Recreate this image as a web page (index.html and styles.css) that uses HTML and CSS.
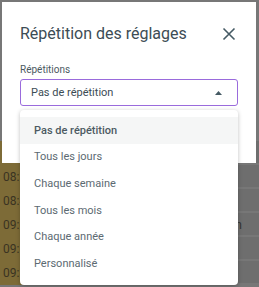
FILE: index.html
```
<html>
<head>
    <link rel="stylesheet" href="styles.css">
</head>
<body>
    <div class="page">
        <div class="row"><div class="time">08:30</div><div class="cell">Rappel</div><div class="side">Modelin</div></div>
        <div class="row"><div class="time">08:30</div><div class="cell"></div><div class="side"></div></div>
        <div class="row"><div class="time">08:45</div><div class="cell"></div><div class="side">Tous</div></div>
        <div class="row"><div class="time">09:00</div><div class="cell"></div><div class="side">Modelin</div></div>
        <div class="row"><div class="time">09:15</div><div class="cell"></div><div class="side"></div></div>
        <div class="row"><div class="time">09:30</div><div class="cell"></div><div class="side">2026</div></div>
    </div>

    <div class="dialog">
        <div class="dialog-head">
            <div class="dialog-title">Répétition des réglages</div>
            <svg class="close" width="14" height="14" viewBox="0 0 14 14">
                <path d="M1.5 1.5 L12.5 12.5 M12.5 1.5 L1.5 12.5" stroke="#455a64" stroke-width="1.6" fill="none"/>
            </svg>
        </div>
        <div class="field-label">Répétitions</div>
        <div class="select">
            <span>Pas de répétition</span>
            <svg width="7" height="4" viewBox="0 0 7 4"><path d="M0 4 L3.5 0 L7 4 Z" fill="#455a64"/></svg>
        </div>
    </div>

    <div class="menu">
        <div class="item active">Pas de répétition</div>
        <div class="item">Tous les jours</div>
        <div class="item">Chaque semaine</div>
        <div class="item">Tous les mois</div>
        <div class="item">Chaque année</div>
        <div class="item">Personnalisé</div>
    </div>
</body>
</html>
```

FILE: styles.css
```
body {
    margin: 0;
    width: 259px;
    height: 287px;
    overflow: hidden;
    background-color: #777777;
    font-family: Roboto, "Liberation Sans", sans-serif;
    position: relative;
}
.page {
    display: flex;
    flex-direction: column;
    gap: 2px;
    padding-top: 141px;
}
.row {
    display: grid;
    grid-template-columns: 120px 1fr 60px;
    height: 22px;
    background-color: #6e6e6e;
    font-size: 12px;
    color: #2e2e2e;
}
.time {
    background-color: #7d6b37;
    padding: 5px 3px;
    color: #3a3322;
}
.cell {
    padding: 5px 3px;
}
.side {
    padding: 5px 0 0 0;
    color: #333;
}
.dialog {
    position: absolute;
    top: 2px;
    left: 2px;
    width: 254px;
    height: 161px;
    background: #ffffff;
    box-sizing: border-box;
    padding: 20px 18px 0 18px;
}
.dialog-head {
    display: flex;
    justify-content: space-between;
    align-items: center;
}
.dialog-title {
    font-size: 16px;
    color: #3c4c55;
    line-height: 24px;
}
.close {
    margin-right: 2px;
}
.field-label {
    margin-top: 18px;
    font-size: 10px;
    color: #4b5a62;
}
.select {
    margin-top: 4px;
    height: 25px;
    border: 1px solid #9a6bdc;
    border-radius: 3px;
    display: flex;
    align-items: center;
    justify-content: space-between;
    padding: 0 15px 0 10px;
    font-size: 11px;
    color: #3c4c55;
}
.menu {
    position: absolute;
    top: 110px;
    left: 20px;
    width: 218px;
    height: 175px;
    background: #ffffff;
    border-radius: 4px;
    box-shadow: 0 1px 4px rgba(0, 0, 0, 0.25);
    padding-top: 7px;
    box-sizing: border-box;
}
.item {
    height: 26.6px;
    display: flex;
    align-items: center;
    padding-left: 14px;
    font-size: 11px;
    color: #5c6a72;
}
.item.active {
    background: #f5f6f6;
    font-weight: 500;
    color: #4c5a62;
}
```
